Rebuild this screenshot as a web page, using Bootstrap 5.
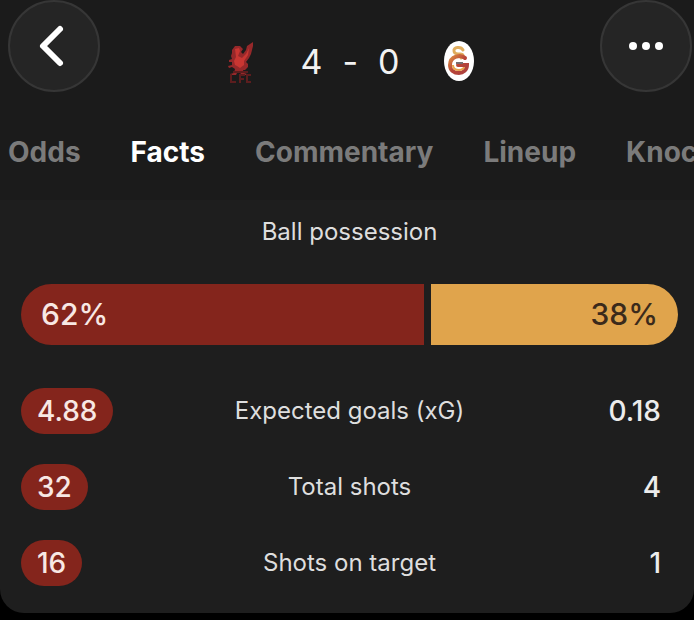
<!DOCTYPE html>
<html lang="en">
<head>
<meta charset="utf-8">
<meta name="viewport" content="width=device-width, initial-scale=1">
<title>Match facts</title>
<link href="https://cdn.jsdelivr.net/npm/bootstrap@5.3.0/dist/css/bootstrap.min.css" rel="stylesheet">
<style>
  body { background: #000; color: #ececec; font-family: Inter, "Liberation Sans", sans-serif; }
  .match-sheet { background: #1e1e1e; border-radius: 0 0 24px 24px; overflow: hidden; }
  .match-top { background: #1b1b1b; height: 200px; }
  .round-btn { width: 92px; height: 92px; background: #252525; border: 2px solid #363636; }
  .match-head { padding: 0 2px 0 8px; }
  .score-line { padding-top: 32px; height: 92px; font-size: 34px; line-height: 60px; gap: 20px; color: #f2f2f2; }
  .crest { width: 32px; height: 44px; }
  .crest-home { margin-right: 24px; }
  .crest-away { margin-left: 24px; }
  .tab-strip { padding: 40px 0 0 8px; gap: 50px; font-size: 28px; line-height: 40px; font-weight: 700; }
  .tab-strip a { color: #7b7b7b; }
  .tab-strip a.active { color: #fff; }
  .facts { padding: 14px 16px 12px 21px; }
  .stat-label { font-size: 24px; line-height: 36px; font-weight: 400; color: #dedede; }
  .possession { height: 61px; margin: 34px 0 28px; gap: 7px; font-size: 30px; font-weight: 500; }
  .side-home { background: #84251c; color: #f8e8e4; padding: 0 20px; }
  .side-away { background: #e0a44c; color: #3b2a1b; padding: 0 20px; }
  .stat-table { font-size: 28px; line-height: 46px; font-weight: 500; table-layout: fixed; }
  .stat-table td, .stat-table th { padding: 15px 0; height: 76px; }
  .home-col, .away-col { width: 24%; }
  .value-pill { background: #84251c; color: #f8e8e4; padding: 0 16px; }
  .stat-table td.away-value { padding-right: 17px; }
</style>
<script src="https://cdn.jsdelivr.net/npm/bootstrap@5.3.0/dist/js/bootstrap.bundle.min.js"></script>
</head>
<body>
<main class="match-sheet">
  <header class="match-top">
    <div class="match-head d-flex justify-content-between align-items-start">
      <button type="button" class="round-btn rounded-circle p-0 d-flex align-items-center justify-content-center" aria-label="Back">
        <svg width="40" height="44" viewBox="0 0 40 44" fill="none" stroke="#fff" stroke-width="6" stroke-linecap="round" stroke-linejoin="round" aria-hidden="true"><path d="M26 5 9 22l17 17"/></svg>
      </button>
      <div class="score-line d-flex align-items-center">
        <svg class="crest crest-home" viewBox="0 0 32 44" role="img" aria-label="Liverpool">
          <path fill="#96282a" d="M8 10l3-4 5 0 3 3-2 3 2 2 3-4 1-4 6-4 0 4-1 4-1 4-2 4-3 4 2 2 0 3-3 3-2 0 1 3 3 1v1h-6l-1-4-2 0-2 4h-6v-1l4-1 1-4-3-2-3 1-1-2 4-1 0-3-3 0 0-2 3-1-1-3 1-3z"/>
          <path fill="#c93632" d="M11 9l4-1 1 3-2 5 4 2 4-4 3-6-1 7-4 6 0 4-4 3-3-2-2-1-1-4 2-4z"/>
          <path d="M7 34v8h5M16 43v-8h5M16 39h4M27 35h-4v7h4M9 32h15" fill="none" stroke="#5c1d1e" stroke-width="2"/>
        </svg>
        <span>4</span><span>-</span><span>0</span>
        <svg class="crest crest-away" viewBox="0 0 32 44" role="img" aria-label="Galatasaray">
          <defs><linearGradient id="crestRing" x1="0" y1="0" x2="1" y2="1"><stop offset="0" stop-color="#dc8b43"/><stop offset=".5" stop-color="#b84538"/><stop offset="1" stop-color="#ad4240"/></linearGradient></defs>
          <ellipse cx="15" cy="21" rx="15" ry="20" fill="#fff"/>
          <path d="M19 10c-2-4-10-3-9 1 0 3 4 3 6 3 4 0 4 3 1 4" fill="none" stroke="#e0ad5d" stroke-width="3" stroke-linecap="round"/>
          <path d="M21 18c-4-4-15-2-15 7 0 5 4 8 9 8 4 0 8-3 8-8h-9" fill="none" stroke="url(#crestRing)" stroke-width="4" stroke-linecap="round"/>
          <path d="M9 25c0 4 3 5 6 5 3 0 5-2 5-3" fill="none" stroke="#e8a64e" stroke-width="2"/>
          <path d="M12 23h7" stroke="#766d70" stroke-width="2"/>
        </svg>
      </div>
      <button type="button" class="round-btn rounded-circle p-0 d-flex align-items-center justify-content-center" aria-label="More options">
        <svg width="40" height="12" viewBox="0 0 40 12" fill="#fff" aria-hidden="true"><circle cx="7" cy="6" r="4"/><circle cx="20" cy="6" r="4"/><circle cx="33" cy="6" r="4"/></svg>
      </button>
    </div>
    <nav class="tab-strip d-flex flex-nowrap overflow-hidden text-nowrap" aria-label="Match sections">
      <a class="text-decoration-none" href="#odds">Odds</a>
      <a class="text-decoration-none active" href="#facts" aria-current="page">Facts</a>
      <a class="text-decoration-none" href="#commentary">Commentary</a>
      <a class="text-decoration-none" href="#lineup">Lineup</a>
      <a class="text-decoration-none" href="#knockout">Knockout</a>
    </nav>
  </header>
  <section class="facts" id="facts">
    <h2 class="stat-label text-center m-0">Ball possession</h2>
    <div class="possession d-flex rounded-pill overflow-hidden">
      <div class="side-home d-flex align-items-center" style="width: 62%">62%</div>
      <div class="side-away d-flex align-items-center justify-content-end" style="width: 38%">38%</div>
    </div>
    <table class="stat-table w-100">
      <colgroup><col class="home-col"><col><col class="away-col"></colgroup>
      <tbody>
        <tr><td><span class="value-pill rounded-pill d-inline-block">4.88</span></td><th scope="row" class="stat-label text-center">Expected goals (xG)</th><td class="away-value text-end">0.18</td></tr>
        <tr><td><span class="value-pill rounded-pill d-inline-block">32</span></td><th scope="row" class="stat-label text-center">Total shots</th><td class="away-value text-end">4</td></tr>
        <tr><td><span class="value-pill rounded-pill d-inline-block">16</span></td><th scope="row" class="stat-label text-center">Shots on target</th><td class="away-value text-end">1</td></tr>
      </tbody>
    </table>
  </section>
</main>
</body>
</html>
